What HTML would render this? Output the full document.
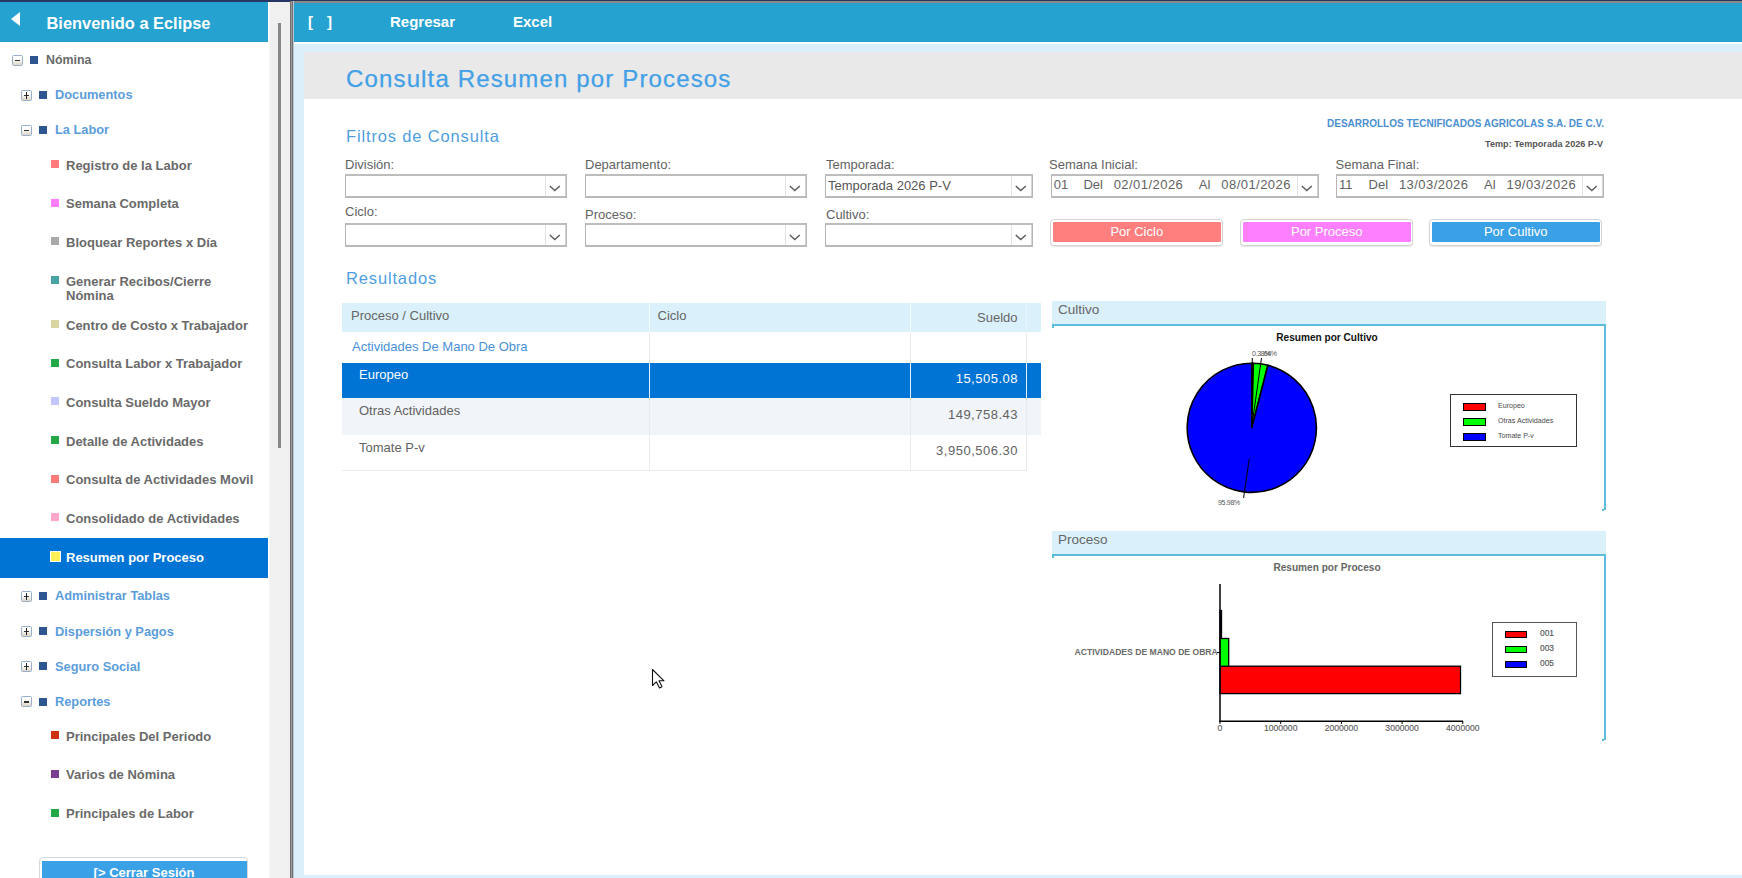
<!DOCTYPE html><html><head><meta charset="utf-8"><title>Consulta Resumen por Procesos</title><style>
*{margin:0;padding:0;box-sizing:border-box}
html,body{width:1742px;height:878px;overflow:hidden;background:#fff;font-family:"Liberation Sans",sans-serif}
.a{position:absolute;white-space:nowrap}
#topline{left:0;top:0;width:1742px;height:2px;background:#263766}
#sbhead{left:0;top:2px;width:268px;height:40px;background:#25a2d0}
#sbtri{left:11px;top:11.5px;width:0;height:0;border-top:7.2px solid transparent;border-bottom:7.2px solid transparent;border-right:9px solid #fff}
#sbtitle{left:46.5px;top:12.5px;color:#fff;font-weight:bold;font-size:16.4px;line-height:20px}
#track{left:269px;top:2px;width:21px;height:876px;background:#f0f0f0;border-left:1px solid #f7f7f7}
#thumb{left:278px;top:23px;width:3px;height:425px;background:#888}
#vsep{left:290px;top:1px;width:4px;height:877px;background:linear-gradient(90deg,#6f6f6f 0,#6f6f6f 1px,#9a9a9a 1px,#9a9a9a 2px,#707070 2px,#707070 3px,#b9c9d2 3px)}
#mtop{left:290px;top:1px;width:1452px;height:2px;background:#8d8a86}
#mhead{left:294px;top:3px;width:1448px;height:39px;background:#25a2d0}
#mline{left:294px;top:42px;width:1448px;height:2px;background:#fff}
#mbg{left:294px;top:44px;width:1448px;height:834px;background:#daeffa}
#mwhite{left:304px;top:52px;width:1438px;height:823px;background:#fff}
#mgray{left:304px;top:52px;width:1438px;height:47px;background:#e9e9e9}
.hbtn{top:13px;color:#fff;font-weight:bold;font-size:15px;line-height:18px}
.sel{background:#0074d4}
.sb1{font-weight:bold;font-size:12.4px;line-height:14px;color:#6a6a6a}
.sb2{font-weight:bold;font-size:12.8px;line-height:14px;color:#5b9ddb}
.sb3{font-weight:bold;font-size:13px;line-height:14px;color:#6a6a6a}
.sq{width:8px;height:8px}
.dsq{width:8px;height:8px;background:#2d5591}
.xb{width:11px;height:11px;border:1px solid #98aeca;background:linear-gradient(#fff 35%,#dcd4c4);border-radius:1.5px}
.xb:before{content:"";position:absolute;left:2px;top:4px;width:5px;height:1.6px;background:#333}
.xb.p:after{content:"";position:absolute;left:3.7px;top:1.5px;width:1.6px;height:6.5px;background:#222}
.lbl{font-size:13px;line-height:15px;color:#626262}
.selbox{height:23px;border:1px solid #b6b6b6;border-top:2px solid #bdbdbd;border-bottom:2px solid #b9b9b9;background:#fff}
.arr{position:absolute;right:0;top:0;width:21px;height:20px;border-left:1px solid #e2e2e2;border-right:1px solid #d6d6d6;background:#fff}
.arr svg{position:absolute;left:0;top:0}
.seltxt{position:absolute;left:2px;top:1.5px;font-size:13px;line-height:15px;color:#555}
.btn{height:27px;border:1px solid #d4d4d4;border-radius:4px;background:#fff;padding:2.5px 1.5px 2px 2px;box-shadow:0 1px 1px #e4e4e4}
.btn div{height:20px;border-radius:1px;color:#fff;font-size:13px;line-height:19px;text-align:center}
.sec{color:#4f9ee0;font-size:16.5px;line-height:20px}
.td{font-size:13px;line-height:15px;color:#626262}
.ph{background:#daf0fb;color:#666;font-size:13.5px;line-height:16px}
</style></head><body>
<div class="a" id="topline"></div>
<div class="a" id="sbhead"></div>
<div class="a" id="sbtri"></div>
<div class="a" id="track"></div>
<div class="a" id="thumb"></div>
<div class="a" id="mtop"></div>
<div class="a" id="vsep"></div>
<div class="a" id="mhead"></div>
<div class="a" id="mline"></div>
<div class="a" id="mbg"></div>
<div class="a" id="mwhite"></div>
<div class="a" id="mgray"></div>
<div class="a" id="sbtitle">Bienvenido a Eclipse</div>
<div class="a hbtn" style="left:308px">[</div><div class="a hbtn" style="left:327px">]</div>
<div class="a hbtn" style="left:390px">Regresar</div>
<div class="a hbtn" style="left:513px">Excel</div>
<div class="a sel" style="left:0;top:538px;width:268px;height:40px"></div>
<div class="a xb" style="left:12px;top:54.5px"></div>
<div class="a dsq" style="left:30px;top:56px"></div>
<div class="a sb1" style="left:46px;top:52.900000000000006px">Nómina</div>
<div class="a xb p" style="left:21px;top:89.5px"></div>
<div class="a dsq" style="left:39px;top:91px"></div>
<div class="a sb2" style="left:55px;top:88.3px">Documentos</div>
<div class="a xb" style="left:21px;top:124.5px"></div>
<div class="a dsq" style="left:39px;top:126px"></div>
<div class="a sb2" style="left:55px;top:123.3px">La Labor</div>
<div class="a sq" style="left:51px;top:160px;background:#ff7b7b;"></div>
<div class="a sb3" style="left:66px;top:158.5px">Registro de la Labor</div>
<div class="a sq" style="left:51px;top:198.5px;background:#ff80ff;"></div>
<div class="a sb3" style="left:66px;top:197.0px">Semana Completa</div>
<div class="a sq" style="left:51px;top:237.3px;background:#a9a9a9;"></div>
<div class="a sb3" style="left:66px;top:235.8px">Bloquear Reportes x Día</div>
<div class="a sq" style="left:51px;top:276px;background:#4aa3a3;"></div>
<div class="a sb3" style="left:66px;top:274.5px">Generar Recibos/Cierre<br>Nómina</div>
<div class="a sq" style="left:51px;top:320px;background:#d8d7a3;"></div>
<div class="a sb3" style="left:66px;top:318.5px">Centro de Costo x Trabajador</div>
<div class="a sq" style="left:51px;top:358.8px;background:#22a845;"></div>
<div class="a sb3" style="left:66px;top:357.3px">Consulta Labor x Trabajador</div>
<div class="a sq" style="left:51px;top:397.2px;background:#c4c4ff;"></div>
<div class="a sb3" style="left:66px;top:395.7px">Consulta Sueldo Mayor</div>
<div class="a sq" style="left:51px;top:436px;background:#22a845;"></div>
<div class="a sb3" style="left:66px;top:434.5px">Detalle de Actividades</div>
<div class="a sq" style="left:51px;top:474.8px;background:#ff7b7b;"></div>
<div class="a sb3" style="left:66px;top:473.3px">Consulta de Actividades Movil</div>
<div class="a sq" style="left:51px;top:513.4px;background:#ffa8cc;"></div>
<div class="a sb3" style="left:66px;top:511.9px">Consolidado de Actividades</div>
<div class="a sq" style="left:51px;top:552.5px;background:#fff05a;width:11px;height:11px;left:50px;top:551px;border:1.5px solid #fff"></div>
<div class="a sb3" style="left:66px;top:551.0px;color:#fff">Resumen por Proceso</div>
<div class="a xb p" style="left:21px;top:590.5px"></div>
<div class="a dsq" style="left:39px;top:592px"></div>
<div class="a sb2" style="left:55px;top:589.3000000000001px">Administrar Tablas</div>
<div class="a xb p" style="left:21px;top:625.8px"></div>
<div class="a dsq" style="left:39px;top:627.3px"></div>
<div class="a sb2" style="left:55px;top:624.6px">Dispersión y Pagos</div>
<div class="a xb p" style="left:21px;top:660.8px"></div>
<div class="a dsq" style="left:39px;top:662.3px"></div>
<div class="a sb2" style="left:55px;top:659.6px">Seguro Social</div>
<div class="a xb" style="left:21px;top:696.0px"></div>
<div class="a dsq" style="left:39px;top:697.5px"></div>
<div class="a sb2" style="left:55px;top:694.8000000000001px">Reportes</div>
<div class="a sq" style="left:51px;top:731.1px;background:#cc3311;"></div>
<div class="a sb3" style="left:66px;top:729.6px">Principales Del Periodo</div>
<div class="a sq" style="left:51px;top:769.8px;background:#7b3f8f;"></div>
<div class="a sb3" style="left:66px;top:768.3px">Varios de Nómina</div>
<div class="a sq" style="left:51px;top:808.5px;background:#22a845;"></div>
<div class="a sb3" style="left:66px;top:807.0px">Principales de Labor</div>
<div class="a" style="left:39px;top:857px;width:209px;height:30px;border:1px solid #d8d8d8;border-radius:4px;background:#fff"></div>
<div class="a" style="left:41.5px;top:860.5px;width:205px;height:25px;background:#3aa1e6;color:#fff;font-weight:bold;font-size:13px;line-height:23px;text-align:center">[&gt; Cerrar Sesión</div>
<div class="a" style="left:346px;top:66px;color:#42a0e6;font-size:24px;line-height:26px;letter-spacing:1.15px;-webkit-text-stroke:0.25px #42a0e6">Consulta Resumen por Procesos</div>
<div class="a sec" style="left:346px;top:126px;letter-spacing:0.85px">Filtros de Consulta</div>
<div class="a" style="left:1327px;top:118px;width:276px;text-align:right;color:#4a90d0;font-weight:bold;font-size:10px;line-height:12px">DESARROLLOS TECNIFICADOS AGRICOLAS S.A. DE C.V.</div>
<div class="a" style="left:1450px;top:139px;width:153px;text-align:right;color:#555;font-weight:bold;font-size:9.1px;line-height:11px">Temp: Temporada 2026 P-V</div>
<div class="a lbl" style="left:345px;top:157.4px">División:</div>
<div class="a lbl" style="left:585px;top:157.4px">Departamento:</div>
<div class="a lbl" style="left:826px;top:157.4px">Temporada:</div>
<div class="a lbl" style="left:1049px;top:157.4px">Semana Inicial:</div>
<div class="a lbl" style="left:1335.5px;top:157.4px">Semana Final:</div>
<div class="a selbox" style="left:345px;top:174px;width:222px;height:24px"><div class="arr"><svg width="21" height="20"><polyline points="3.8,10 8.8,14.6 13.8,10" fill="none" stroke="#5c5c5c" stroke-width="1.4"/></svg></div></div>
<div class="a selbox" style="left:585px;top:174px;width:222px;height:24px"><div class="arr"><svg width="21" height="20"><polyline points="3.8,10 8.8,14.6 13.8,10" fill="none" stroke="#5c5c5c" stroke-width="1.4"/></svg></div></div>
<div class="a selbox" style="left:825px;top:174px;width:208px;height:24px"><div class="arr"><svg width="21" height="20"><polyline points="3.8,10 8.8,14.6 13.8,10" fill="none" stroke="#5c5c5c" stroke-width="1.4"/></svg></div><div class="seltxt">Temporada 2026 P-V</div></div>
<div class="a selbox" style="left:1051px;top:174px;width:268px;height:24px"><div class="arr"><svg width="21" height="20"><polyline points="3.8,10 8.8,14.6 13.8,10" fill="none" stroke="#5c5c5c" stroke-width="1.4"/></svg></div></div>
<div class="a selbox" style="left:1336px;top:174px;width:268px;height:24px"><div class="arr"><svg width="21" height="20"><polyline points="3.8,10 8.8,14.6 13.8,10" fill="none" stroke="#5c5c5c" stroke-width="1.4"/></svg></div></div>
<div class="a lbl" style="left:1053.8px;top:177.3px;">01</div>
<div class="a lbl" style="left:1083.4px;top:177.3px;">Del</div>
<div class="a lbl" style="left:1113.7px;top:177.3px;letter-spacing:0.45px;">02/01/2026</div>
<div class="a lbl" style="left:1198.8px;top:177.3px;">Al</div>
<div class="a lbl" style="left:1221.3px;top:177.3px;letter-spacing:0.45px;">08/01/2026</div>
<div class="a lbl" style="left:1339px;top:177.3px;">11</div>
<div class="a lbl" style="left:1368.6px;top:177.3px;">Del</div>
<div class="a lbl" style="left:1398.9px;top:177.3px;letter-spacing:0.45px;">13/03/2026</div>
<div class="a lbl" style="left:1484px;top:177.3px;">Al</div>
<div class="a lbl" style="left:1506.5px;top:177.3px;letter-spacing:0.45px;">19/03/2026</div>
<div class="a lbl" style="left:345px;top:204.2px">Ciclo:</div>
<div class="a lbl" style="left:585px;top:206.5px">Proceso:</div>
<div class="a lbl" style="left:826px;top:206.5px">Cultivo:</div>
<div class="a selbox" style="left:345px;top:222.5px;width:222px;height:24px"><div class="arr"><svg width="21" height="20"><polyline points="3.8,10 8.8,14.6 13.8,10" fill="none" stroke="#5c5c5c" stroke-width="1.4"/></svg></div></div>
<div class="a selbox" style="left:585px;top:222.5px;width:222px;height:24px"><div class="arr"><svg width="21" height="20"><polyline points="3.8,10 8.8,14.6 13.8,10" fill="none" stroke="#5c5c5c" stroke-width="1.4"/></svg></div></div>
<div class="a selbox" style="left:825px;top:222.5px;width:208px;height:24px"><div class="arr"><svg width="21" height="20"><polyline points="3.8,10 8.8,14.6 13.8,10" fill="none" stroke="#5c5c5c" stroke-width="1.4"/></svg></div></div>
<div class="a btn" style="left:1050px;top:218.5px;width:173px"><div style="background:#ff7f7f">Por Ciclo</div></div>
<div class="a btn" style="left:1240px;top:218.5px;width:173px"><div style="background:#ff80ff">Por Proceso</div></div>
<div class="a btn" style="left:1429px;top:218.5px;width:173px"><div style="background:#3aa1e6">Por Cultivo</div></div>
<div class="a sec" style="left:346px;top:268px;letter-spacing:0.85px">Resultados</div>
<div class="a" style="left:342px;top:303px;width:699px;height:29px;background:#daf0fb"></div>
<div class="a" style="left:342px;top:362.5px;width:699px;height:35.5px;background:#0074d4"></div>
<div class="a" style="left:342px;top:398px;width:699px;height:37px;background:#f1f4f8"></div>
<div class="a" style="left:649px;top:303px;width:1px;height:168px;background:#e8eaec"></div>
<div class="a" style="left:910px;top:303px;width:1px;height:168px;background:#e8eaec"></div>
<div class="a" style="left:649px;top:303px;width:1px;height:29px;background:#f5fbfe"></div>
<div class="a" style="left:910px;top:303px;width:1px;height:29px;background:#f5fbfe"></div>
<div class="a" style="left:1026px;top:303px;width:1px;height:29px;background:#e9f5fb"></div>
<div class="a" style="left:649px;top:362.5px;width:1px;height:35.5px;background:#e8f0fa"></div>
<div class="a" style="left:910px;top:362.5px;width:1px;height:35.5px;background:#e8f0fa"></div>
<div class="a" style="left:1026px;top:332px;width:1px;height:139px;background:#e8eaec"></div>
<div class="a" style="left:1026px;top:362.5px;width:1px;height:35.5px;background:#e8f0fa"></div>
<div class="a" style="left:342px;top:470px;width:685px;height:1px;background:#e8eaec"></div>
<div class="a td" style="left:351px;top:307.6px;color:#666">Proceso / Cultivo</div>
<div class="a td" style="left:657.5px;top:307.6px;color:#666">Ciclo</div>
<div class="a td" style="left:817.5px;width:200px;text-align:right;top:309.7px;color:#666;">Sueldo</div>
<div class="a td" style="left:352px;top:338.7px;color:#4a90d9">Actividades De Mano De Obra</div>
<div class="a td" style="left:359px;top:367px;color:#fff">Europeo</div>
<div class="a td" style="left:818.0px;width:200px;text-align:right;top:371.2px;color:#fff;letter-spacing:0.5px;">15,505.08</div>
<div class="a td" style="left:359px;top:402.9px;color:#626262">Otras Actividades</div>
<div class="a td" style="left:818.0px;width:200px;text-align:right;top:407.1px;color:#626262;letter-spacing:0.5px;">149,758.43</div>
<div class="a td" style="left:359px;top:439.8px;color:#626262">Tomate P-v</div>
<div class="a td" style="left:818.0px;width:200px;text-align:right;top:443px;color:#626262;letter-spacing:0.5px;">3,950,506.30</div>
<div class="a ph" style="left:1052px;top:300.8px;width:554px;height:23.5px;padding:1.3px 0 0 6px">Cultivo</div>
<div class="a" style="left:1052px;top:324.3px;width:554px;height:2px;background:#5dbcde"></div>
<div class="a" style="left:1052px;top:326.3px;width:2px;height:2px;background:#5dbcde"></div>
<div class="a" style="left:1604px;top:324.3px;width:2px;height:186.2px;background:#5dbcde"></div>
<div class="a" style="left:1602px;top:509.0px;width:2px;height:1.5px;background:#5dbcde"></div>
<div class="a ph" style="left:1052px;top:530.8px;width:554px;height:23.5px;padding:1.3px 0 0 6px">Proceso</div>
<div class="a" style="left:1052px;top:554.3px;width:554px;height:2px;background:#5dbcde"></div>
<div class="a" style="left:1052px;top:556.3px;width:2px;height:2px;background:#5dbcde"></div>
<div class="a" style="left:1604px;top:554.3px;width:2px;height:186.20000000000005px;background:#5dbcde"></div>
<div class="a" style="left:1602px;top:739.0px;width:2px;height:1.5px;background:#5dbcde"></div>
<svg class="a" style="left:0;top:0" width="1742" height="878"><path d="M1251.8,427.8 L1251.80,363.20 A64.6,64.6 0 0 1 1253.33,363.22 Z" fill="#ff0000" stroke="#000" stroke-width="1.6" stroke-linejoin="round"/><path d="M1251.8,427.8 L1253.33,363.22 A64.6,64.6 0 0 1 1267.93,365.25 Z" fill="#00ff00" stroke="#000" stroke-width="1.6" stroke-linejoin="round"/><path d="M1251.8,427.8 L1267.93,365.25 A64.6,64.6 0 1 1 1251.80,363.20 Z" fill="#0000ff" stroke="#000" stroke-width="1.6" stroke-linejoin="round"/><line x1="1252.3" y1="358" x2="1252.1" y2="398" stroke="#000" stroke-width="1"/><line x1="1261.5" y1="358" x2="1253" y2="418" stroke="#000" stroke-width="1"/><line x1="1249.2" y1="459" x2="1243.6" y2="498" stroke="#000" stroke-width="1"/></svg>
<div class="a" style="left:1227px;top:332px;width:200px;text-align:center;color:#111;font-weight:bold;font-size:10.1px;line-height:12px">Resumen por Cultivo</div>
<div class="a" style="left:1252px;top:348.5px;color:#555;font-size:7px;line-height:9px;letter-spacing:-0.3px">0.38%</div>
<div class="a" style="left:1262px;top:348.5px;color:#555;font-size:7px;line-height:9px;letter-spacing:-0.3px">.64%</div>
<div class="a" style="left:1218px;top:498px;color:#555;font-size:7px;line-height:9px;letter-spacing:-0.3px">95.98%</div>
<div class="a" style="left:1449.5px;top:394.3px;width:127.5px;height:52.3px;border:1.5px solid #333;background:#fff"></div>
<div class="a" style="left:1463px;top:403.3px;width:23px;height:7.5px;background:#ff0000;border:1px solid #000"></div>
<div class="a" style="left:1498px;top:402.3px;color:#4a4a4a;font-size:7.1px;line-height:9px">Europeo</div>
<div class="a" style="left:1463px;top:418.3px;width:23px;height:7.5px;background:#00ff00;border:1px solid #000"></div>
<div class="a" style="left:1498px;top:417.3px;color:#4a4a4a;font-size:7.1px;line-height:9px">Otras Actividades</div>
<div class="a" style="left:1463px;top:433.3px;width:23px;height:7.5px;background:#0000ff;border:1px solid #000"></div>
<div class="a" style="left:1498px;top:432.3px;color:#4a4a4a;font-size:7.1px;line-height:9px">Tomate P-v</div>
<div class="a" style="left:1227px;top:562px;width:200px;text-align:center;color:#666;font-weight:bold;font-size:10.1px;line-height:12px">Resumen por Proceso</div>
<svg class="a" style="left:0;top:0" width="1742" height="878"><rect x="1220" y="666.2" width="240.5" height="27.4" fill="#ff0000" stroke="#000" stroke-width="1.3"/><rect x="1220" y="638.5" width="8.7" height="27.7" fill="#00ff00" stroke="#000" stroke-width="1.3"/><rect x="1220" y="610.5" width="1.5" height="28" fill="#0000ff" stroke="#000" stroke-width="1.3"/><line x1="1220" y1="584" x2="1220" y2="722" stroke="#000" stroke-width="1.5"/><line x1="1219.5" y1="721.3" x2="1463" y2="721.3" stroke="#000" stroke-width="1.5"/><line x1="1217" y1="652.5" x2="1220" y2="652.5" stroke="#000" stroke-width="1"/><line x1="1220.0" y1="721" x2="1220.0" y2="724" stroke="#000" stroke-width="1"/><line x1="1280.7" y1="721" x2="1280.7" y2="724" stroke="#000" stroke-width="1"/><line x1="1341.4" y1="721" x2="1341.4" y2="724" stroke="#000" stroke-width="1"/><line x1="1402.1" y1="721" x2="1402.1" y2="724" stroke="#000" stroke-width="1"/><line x1="1462.8" y1="721" x2="1462.8" y2="724" stroke="#000" stroke-width="1"/></svg>
<div class="a" style="left:1017.8px;top:647px;width:200px;text-align:right;color:#6a6a6a;font-weight:bold;font-size:8.6px;line-height:11px">ACTIVIDADES DE MANO DE OBRA</div>
<div class="a" style="left:1190.0px;top:722.8px;width:60px;text-align:center;color:#5e5e5e;font-size:8.6px;line-height:10px;-webkit-text-stroke:0.15px #5e5e5e">0</div>
<div class="a" style="left:1250.7px;top:722.8px;width:60px;text-align:center;color:#5e5e5e;font-size:8.6px;line-height:10px;-webkit-text-stroke:0.15px #5e5e5e">1000000</div>
<div class="a" style="left:1311.4px;top:722.8px;width:60px;text-align:center;color:#5e5e5e;font-size:8.6px;line-height:10px;-webkit-text-stroke:0.15px #5e5e5e">2000000</div>
<div class="a" style="left:1372.1px;top:722.8px;width:60px;text-align:center;color:#5e5e5e;font-size:8.6px;line-height:10px;-webkit-text-stroke:0.15px #5e5e5e">3000000</div>
<div class="a" style="left:1432.8px;top:722.8px;width:60px;text-align:center;color:#5e5e5e;font-size:8.6px;line-height:10px;-webkit-text-stroke:0.15px #5e5e5e">4000000</div>
<div class="a" style="left:1491.5px;top:622.3px;width:85px;height:55px;border:1px solid #555;background:#fff"></div>
<div class="a" style="left:1505px;top:631px;width:22px;height:7px;background:#ff0000;border:1px solid #000"></div>
<div class="a" style="left:1540px;top:628.2px;color:#555;font-size:8.4px;line-height:10px;-webkit-text-stroke:0.15px #555">001</div>
<div class="a" style="left:1505px;top:646px;width:22px;height:7px;background:#00ff00;border:1px solid #000"></div>
<div class="a" style="left:1540px;top:643.2px;color:#555;font-size:8.4px;line-height:10px;-webkit-text-stroke:0.15px #555">003</div>
<div class="a" style="left:1505px;top:661px;width:22px;height:7px;background:#0000ff;border:1px solid #000"></div>
<div class="a" style="left:1540px;top:658.2px;color:#555;font-size:8.4px;line-height:10px;-webkit-text-stroke:0.15px #555">005</div>
<svg class="a" style="left:0;top:0" width="1742" height="878"><path d="M652.5,669.5 L652.5,685.5 L656.3,681.8 L659.5,688 L662,686.8 L659,680.8 L664,680.8 Z" fill="#fff" stroke="#111" stroke-width="1.1" stroke-linejoin="round"/></svg>
</body></html>
